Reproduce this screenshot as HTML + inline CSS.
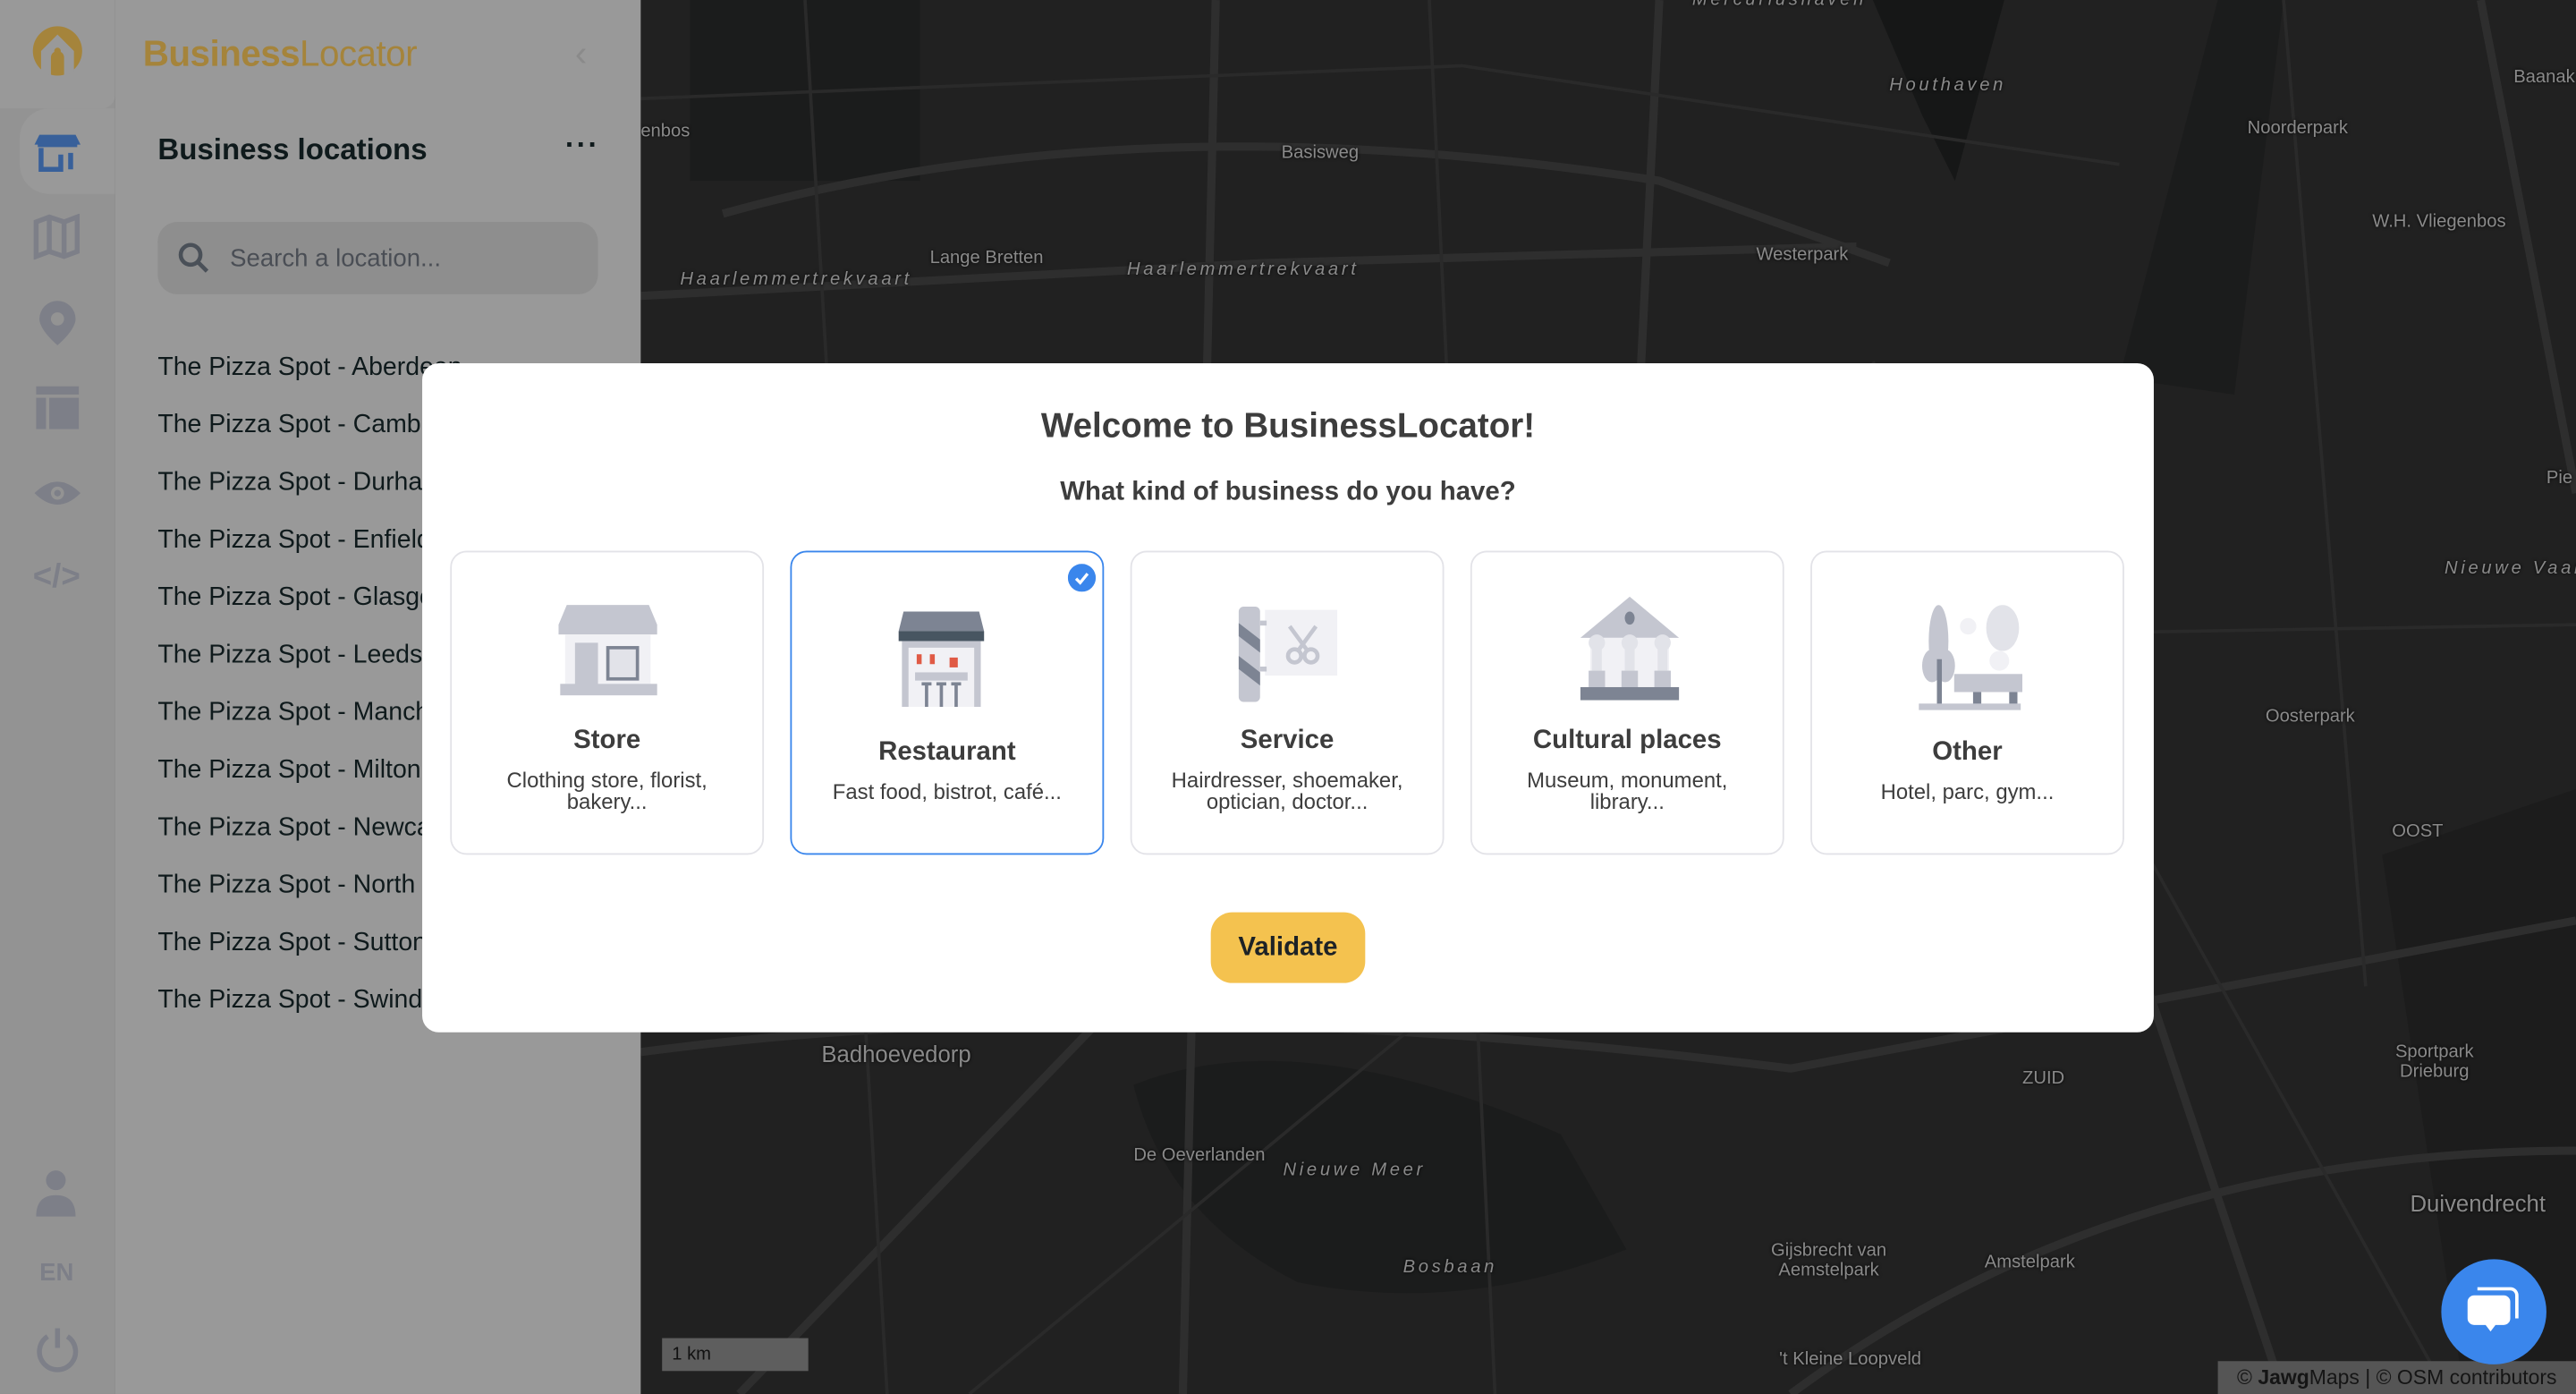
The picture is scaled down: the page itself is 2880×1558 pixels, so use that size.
<!DOCTYPE html>
<html><head><meta charset="utf-8"><style>
html,body{margin:0;padding:0;width:2880px;height:1558px;overflow:hidden;background:#222;}
#s{position:absolute;left:0;top:0;width:1568px;height:848px;transform:scale(1.83673,1.83726);transform-origin:0 0;font-family:"Liberation Sans",sans-serif;overflow:hidden;background:#212121;}
.a{position:absolute;}
.lbl{position:absolute;color:#8a8a8a;font-size:11px;text-shadow:0 0 2px #000;white-space:nowrap;}
.it{font-style:italic;letter-spacing:2px;}
.rail{left:0;top:0;width:70px;height:848px;background:#939393;}
.item{position:absolute;left:96px;font-size:15.5px;color:#0f1a1c;}
.modal{left:257px;top:221px;width:1054px;height:407px;background:#fff;border-radius:10px;}
.card{position:absolute;top:114px;width:191px;height:185px;border:1.5px solid #e3e3e8;border-radius:10px;box-sizing:border-box;text-align:center;color:#3d3d3d;}
.card .t{position:absolute;left:0;right:0;font-size:16px;font-weight:bold;}
.card .d{position:absolute;left:10px;right:10px;font-size:13px;line-height:13px;}
</style></head><body><div id="s">
<svg class="a" style="left:390px;top:0" width="1178" height="848">
<g fill="#161717"><path d="M750 0 L830 0 L800 110 L780 70Z"/><path d="M30 0 L170 0 L170 110 L30 110Z" opacity=".5"/><path d="M1060 520 L1178 480 L1178 848 L1110 848Z" opacity=".4"/><path d="M300 660 Q400 620 560 690 L600 760 Q500 800 400 780 Q320 740 300 660Z" opacity=".5"/><path d="M900 230 L960 0 L1000 0 L970 240Z" opacity=".5"/></g>
<g stroke="#2e2e2e" fill="none" stroke-width="5"><path d="M0 180 L380 160 L740 150"/><path d="M50 130 Q300 60 620 110 L760 160"/><path d="M350 0 L330 848"/><path d="M620 0 L600 400"/><path d="M0 640 Q300 600 700 650 L1178 560"/><path d="M1120 0 L1178 300"/><path d="M60 848 L280 620"/><path d="M700 848 Q900 700 1178 700"/><path d="M850 400 L1000 848"/></g>
<g stroke="#2a2a2a" fill="none" stroke-width="2"><path d="M0 60 L500 40 L900 100"/><path d="M100 0 L150 848"/><path d="M480 0 L520 848"/><path d="M750 220 L1100 848"/><path d="M0 400 L1178 380"/><path d="M200 848 L500 600"/><path d="M1000 0 L1050 600"/></g>
</svg>
<div class="lbl" style="left:390px;top:74px">enbos</div>
<div class="lbl" style="left:780px;top:87px">Basisweg</div>
<div class="lbl" style="left:566px;top:151px">Lange Bretten</div>
<div class="lbl it" style="left:414px;top:164px">Haarlemmertrekvaart</div>
<div class="lbl it" style="left:686px;top:158px">Haarlemmertrekvaart</div>
<div class="lbl it" style="left:1150px;top:46px">Houthaven</div>
<div class="lbl it" style="left:1030px;top:-6px">Mercuriushaven</div>
<div class="lbl" style="left:1069px;top:149px">Westerpark</div>
<div class="lbl" style="left:1368px;top:72px">Noorderpark</div>
<div class="lbl" style="left:1444px;top:129px">W.H. Vliegenbos</div>
<div class="lbl" style="left:1530px;top:41px">Baanak</div>
<div class="lbl" style="left:1550px;top:285px">Pie</div>
<div class="lbl it" style="left:1488px;top:340px">Nieuwe Vaar</div>
<div class="lbl" style="left:1379px;top:430px">Oosterpark</div>
<div class="lbl" style="left:1456px;top:500px">OOST</div>
<div class="lbl" style="left:500px;top:633px;font-size:14px">Badhoevedorp</div>
<div class="lbl" style="left:1231px;top:650px">ZUID</div>
<div class="lbl" style="left:1458px;top:634px;text-align:center">Sportpark<br>Drieburg</div>
<div class="lbl" style="left:690px;top:697px">De Oeverlanden</div>
<div class="lbl it" style="left:781px;top:706px">Nieuwe Meer</div>
<div class="lbl it" style="left:854px;top:765px">Bosbaan</div>
<div class="lbl" style="left:1078px;top:755px;text-align:center">Gijsbrecht van<br>Aemstelpark</div>
<div class="lbl" style="left:1208px;top:762px">Amstelpark</div>
<div class="lbl" style="left:1467px;top:724px;font-size:14px">Duivendrecht</div>
<div class="lbl" style="left:1083px;top:821px">'t Kleine Loopveld</div>
<div class="a" style="left:403px;top:814px;width:89px;height:20px;background:#5e5e5e;color:#111;font-size:11px;line-height:20px;padding-left:6px;box-sizing:border-box">1 km</div>
<div class="a" style="left:1350px;top:828px;width:218px;height:20px;background:#555;color:#151515;font-size:12.5px;line-height:20px;text-align:center">© <b>Jawg</b>Maps | © OSM contributors</div>
<div class="a" style="left:1486px;top:766px;width:64px;height:64px;border-radius:50%;background:#3a86ec"></div>
<svg class="a" style="left:1498px;top:778px" width="40" height="40"><path d="M10 6 h20 a4 4 0 0 1 4 4 v14" stroke="#fff" stroke-width="2" fill="none"/><path d="M8 10 h18 a4 4 0 0 1 4 4 v10 a4 4 0 0 1 -4 4 h-5 l-3 4 l-3 -4 h-7 a4 4 0 0 1 -4 -4 v-10 a4 4 0 0 1 4 -4z" fill="#fff"/></svg>

<div class="a rail"></div>
<div class="a" style="left:70px;top:0;width:320px;height:848px;background:#999"></div>
<div class="a" style="left:0;top:0;width:70px;height:66px;background:#999;border-bottom-right-radius:8px"></div>
<div class="a" style="left:12px;top:66px;width:58px;height:52px;background:#999;border-radius:18px 0 0 18px"></div>
<svg class="a" style="left:17px;top:13px" width="36" height="36"><circle cx="18" cy="18" r="15" fill="#a5843b"/><path d="M8 18 L18 8 L28 18 L28 31 L22 33 L22 22 A4 4 0 0 0 14 22 L14 33 L8 31Z" fill="#999"/><circle cx="18" cy="18" r="2" fill="#a5843b"/></svg>
<div class="a" style="left:87px;top:20px;font-size:22px;color:#a5843b;letter-spacing:-.3px"><b style="font-weight:600">Business</b>Locator</div>
<div class="a" style="left:350px;top:20px;color:#8a8a8a;font-size:22px">‹</div>
<svg class="a" style="left:20px;top:78px" width="30" height="30"><path d="M4 4 h22 l3 6 h-28z" fill="#38609a"/><path d="M3 10 h24" stroke="#38609a" stroke-width="3"/><path d="M5 12 v13 h12 v-9 M23 15 v10" stroke="#38609a" stroke-width="3" fill="none"/></svg>
<svg class="a" style="left:20px;top:130px" width="30" height="28" fill="none" stroke="#7d7f88" stroke-width="3"><path d="M2 5 L10 2 L19 5 L27 2 V23 L19 26 L10 23 L2 26Z M10 2 V23 M19 5 V26"/></svg>
<svg class="a" style="left:22px;top:182px" width="26" height="30"><path d="M13 1 A11 11 0 0 1 24 12 C24 19 13 28 13 28 C13 28 2 19 2 12 A11 11 0 0 1 13 1Z" fill="#7d7f88"/><circle cx="13" cy="12" r="4" fill="#939393"/></svg>
<svg class="a" style="left:21px;top:234px" width="28" height="28"><rect x="1" y="1" width="26" height="5" fill="#7d7f88"/><rect x="1" y="8" width="6" height="19" fill="#7d7f88"/><rect x="9" y="8" width="18" height="19" fill="#7d7f88"/></svg>
<svg class="a" style="left:20px;top:290px" width="30" height="20"><path d="M1 10 Q15 -4 29 10 Q15 24 1 10Z" fill="#7d7f88"/><circle cx="15" cy="10" r="4" fill="#939393"/><circle cx="15" cy="10" r="2" fill="#7d7f88"/></svg>
<div class="a" style="left:20px;top:340px;color:#7d7f88;font-size:20px;font-weight:bold">&lt;/&gt;</div>
<svg class="a" style="left:21px;top:710px" width="28" height="32"><circle cx="13" cy="8" r="6" fill="#7d7f88"/><path d="M1 30 Q1 17 13 17 Q25 17 25 30Z" fill="#7d7f88"/></svg>
<div class="a" style="left:24px;top:766px;color:#7d7f88;font-size:15px;font-weight:bold">EN</div>
<svg class="a" style="left:20px;top:806px" width="30" height="30" fill="none" stroke="#7d7f88" stroke-width="3"><path d="M9 7 A11 11 0 1 0 21 7"/><path d="M15 2 V14"/></svg>
<div class="a" style="left:96px;top:81px;font-size:18px;font-weight:bold;color:#0f1a1c">Business locations</div>
<div class="a" style="left:344px;top:78px;font-size:18px;color:#0f1a1c;font-weight:bold;letter-spacing:1px">···</div>
<div class="a" style="left:96px;top:135px;width:268px;height:44px;background:#8e8e8e;border-radius:12px"></div>
<svg class="a" style="left:108px;top:147px" width="20" height="20" fill="none" stroke="#4a5058" stroke-width="2.5"><circle cx="8" cy="8" r="6"/><path d="M12.5 12.5 L18 18"/></svg>
<div class="a" style="left:140px;top:149px;font-size:15px;color:#4a4e55">Search a location...</div>
<div class="item" style="top:215px">The Pizza Spot - Aberdeen</div>
<div class="item" style="top:250px">The Pizza Spot - Cambridge</div>
<div class="item" style="top:285px">The Pizza Spot - Durham</div>
<div class="item" style="top:320px">The Pizza Spot - Enfield</div>
<div class="item" style="top:355px">The Pizza Spot - Glasgow</div>
<div class="item" style="top:390px">The Pizza Spot - Leeds</div>
<div class="item" style="top:425px">The Pizza Spot - Manchester</div>
<div class="item" style="top:460px">The Pizza Spot - Milton Keynes</div>
<div class="item" style="top:495px">The Pizza Spot - Newcastle</div>
<div class="item" style="top:530px">The Pizza Spot - North West</div>
<div class="item" style="top:565px">The Pizza Spot - Sutton</div>
<div class="item" style="top:600px">The Pizza Spot - Swindon</div>

<div class="a modal">
<div class="a" style="left:0;right:0;top:27px;text-align:center;font-size:21px;font-weight:600;color:#3d3d3d">Welcome to BusinessLocator!</div>
<div class="a" style="left:0;right:0;top:70px;text-align:center;font-size:16px;font-weight:600;color:#3d3d3d">What kind of business do you have?</div>

<div class="card" style="left:17px">
<svg class="a" style="left:64px;top:30px" width="64" height="58"><path d="M6 2 h50 l5 12 v6 h-60 v-6z" fill="#c4c6d0"/><rect x="5" y="20" width="52" height="30" fill="#f1f1f5"/><rect x="11" y="25" width="14" height="26" fill="#c4c6d0"/><rect x="30" y="27" width="20" height="21" fill="#7d8493"/><rect x="32" y="29" width="16" height="17" fill="#e2e3e9"/><rect x="2" y="50" width="59" height="7" fill="#c4c6d0"/></svg>
<div class="t" style="top:106px">Store</div>
<div class="d" style="top:132px">Clothing store, florist, bakery...</div></div>

<div class="card" style="left:224px;border-color:#3a86ec">
<svg class="a" style="left:168px;top:7px" width="17" height="17"><circle cx="8.5" cy="8.5" r="8.5" fill="#3a86ec"/><path d="M5 9 L7.5 11.5 L12 6" stroke="#fff" stroke-width="1.8" fill="none"/></svg>
<svg class="a" style="left:64px;top:36px" width="64" height="58"><path d="M4 0 h46 l3 12 h-52z" fill="#7d8493"/><rect x="1" y="12" width="52" height="6" fill="#475561"/><rect x="3" y="18" width="48" height="40" fill="#c4c6d0"/><rect x="7" y="22" width="40" height="36" fill="#f1f1f5"/><rect x="12" y="26" width="3" height="6" fill="#e05a45"/><rect x="20" y="26" width="3" height="6" fill="#e05a45"/><rect x="32" y="28" width="5" height="6" fill="#e05a45"/><rect x="11" y="37" width="32" height="5" fill="#c4c6d0"/><path d="M15 44 h6 M18 44 v14 M24 44 h6 M27 44 v14 M33 44 h6 M36 44 v14" stroke="#7d8493" stroke-width="2"/></svg>
<div class="t" style="top:113px">Restaurant</div>
<div class="d" style="top:139px">Fast food, bistrot, café...</div></div>

<div class="card" style="left:431px">
<svg class="a" style="left:64px;top:25px" width="64" height="70"><rect x="17" y="10" width="44" height="40" fill="#f1f1f5"/><path d="M14 18 h4 M14 46 h4" stroke="#c4c6d0" stroke-width="3"/><rect x="1" y="8" width="13" height="58" rx="3" fill="#c4c6d0"/><path d="M1 18 L14 28 L14 36 L1 26Z M1 38 L14 48 L14 56 L1 46Z" fill="#7d8493"/><circle cx="35" cy="38" r="4" stroke="#c4c6d0" stroke-width="2.5" fill="none"/><circle cx="45" cy="38" r="4" stroke="#c4c6d0" stroke-width="2.5" fill="none"/><path d="M37 35 L48 20 M43 35 L32 20" stroke="#c4c6d0" stroke-width="2.5"/></svg>
<div class="t" style="top:106px">Service</div>
<div class="d" style="top:132px">Hairdresser, shoemaker, optician, doctor...</div></div>

<div class="card" style="left:638px">
<svg class="a" style="left:64px;top:26px" width="64" height="64"><path d="M32 1 L62 26 H2Z" fill="#c4c6d0"/><ellipse cx="32" cy="14" rx="3" ry="4" fill="#7d8493"/><rect x="8" y="26" width="48" height="30" fill="#f1f1f5"/><g fill="#e2e3e9"><circle cx="12" cy="29" r="5"/><circle cx="32" cy="29" r="5"/><circle cx="52" cy="29" r="5"/><rect x="9" y="30" width="6" height="20"/><rect x="29" y="30" width="6" height="20"/><rect x="49" y="30" width="6" height="20"/></g><g fill="#c4c6d0"><rect x="7" y="46" width="10" height="10"/><rect x="27" y="46" width="10" height="10"/><rect x="47" y="46" width="10" height="10"/></g><rect x="2" y="56" width="60" height="8" fill="#7d8493"/></svg>
<div class="t" style="top:106px">Cultural places</div>
<div class="d" style="top:132px">Museum, monument, library...</div></div>

<div class="card" style="left:845px">
<svg class="a" style="left:64px;top:32px" width="64" height="64"><ellipse cx="13" cy="22" rx="6" ry="22" fill="#c4c6d0"/><ellipse cx="9" cy="37" rx="6" ry="10" fill="#c4c6d0"/><ellipse cx="17" cy="37" rx="6" ry="10" fill="#c4c6d0"/><rect x="12" y="33" width="3" height="28" fill="#7d8493"/><ellipse cx="52" cy="14" rx="10" ry="14" fill="#e2e3e9"/><circle cx="31" cy="13" r="5" fill="#f1f1f5"/><circle cx="50" cy="34" r="6" fill="#f1f1f5"/><rect x="30" y="42" width="44" height="11" fill="#c4c6d0" transform="translate(-6 0) scale(.95 1)"/><rect x="34" y="53" width="5" height="10" fill="#7d8493"/><rect x="56" y="53" width="5" height="10" fill="#7d8493"/><rect x="1" y="60" width="62" height="4" fill="#c4c6d0"/></svg>
<div class="t" style="top:113px">Other</div>
<div class="d" style="top:139px">Hotel, parc, gym...</div></div>

<div class="a" style="left:480px;top:334px;width:94px;height:43px;background:#f4c24f;border-radius:13px;text-align:center;line-height:43px;font-size:16px;font-weight:bold;color:#1d2226">Validate</div>
</div>
</div></body></html>
